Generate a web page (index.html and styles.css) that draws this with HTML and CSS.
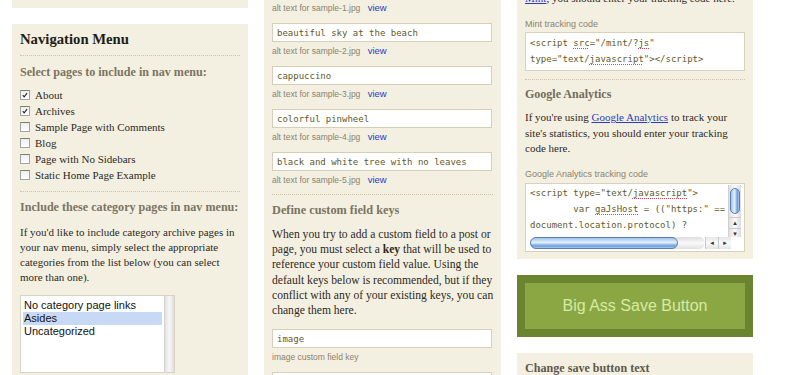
FILE: index.html
```html
<!DOCTYPE html>
<html lang="en">
<head>
    <meta charset="UTF-8">
    <meta name="viewport" content="width=device-width, initial-scale=1.0">
    <title>Theme Options</title>
    <link rel="stylesheet" href="styles.css">
</head>
<body>

<div class="page">

    <!-- Left column: navigation menu options -->
    <div class="column">
        <div class="panel panel-stub"></div>

        <div class="panel">
            <h2 class="panel-title">Navigation Menu</h2>

            <div class="section">
                <h3 class="subhead">Select pages to include in nav menu:</h3>
                <ul class="checklist">
                    <li><span class="checkbox checked"><svg viewBox="0 0 10 10"><path d="M2.2 5.2 L4 7.4 L7.6 2.6"/></svg></span>About</li>
                    <li><span class="checkbox checked"><svg viewBox="0 0 10 10"><path d="M2.2 5.2 L4 7.4 L7.6 2.6"/></svg></span>Archives</li>
                    <li><span class="checkbox"></span>Sample Page with Comments</li>
                    <li><span class="checkbox"></span>Blog</li>
                    <li><span class="checkbox"></span>Page with No Sidebars</li>
                    <li><span class="checkbox"></span>Static Home Page Example</li>
                </ul>
            </div>

            <div class="section">
                <h3 class="subhead">Include these category pages in nav menu:</h3>
                <p class="text">If you'd like to include category archive pages in<br>
                    your nav menu, simply select the appropriate<br>
                    categories from the list below (you can select<br>
                    more than one).</p>
                <div class="listbox">
                    <ul>
                        <li>No category page links</li>
                        <li class="selected">Asides</li>
                        <li>Uncategorized</li>
                    </ul>
                    <div class="listbox-track"></div>
                </div>
            </div>
        </div>
    </div>

    <!-- Middle column: image alt texts and custom field keys -->
    <div class="column">
        <div class="panel panel-mid">
            <div class="section">
                <div class="hint first">alt text for sample-1.jpg <a href="#">view</a></div>

                <div class="field">
                    <input type="text" value="beautiful sky at the beach">
                    <div class="hint">alt text for sample-2.jpg <a href="#">view</a></div>
                </div>
                <div class="field">
                    <input type="text" value="cappuccino">
                    <div class="hint">alt text for sample-3.jpg <a href="#">view</a></div>
                </div>
                <div class="field">
                    <input type="text" value="colorful pinwheel">
                    <div class="hint">alt text for sample-4.jpg <a href="#">view</a></div>
                </div>
                <div class="field">
                    <input type="text" value="black and white tree with no leaves">
                    <div class="hint">alt text for sample-5.jpg <a href="#">view</a></div>
                </div>
            </div>

            <div class="section">
                <h3 class="subhead">Define custom field keys</h3>
                <p class="text">When you try to add a custom field to a post or<br>
                    page, you must select a <b>key</b> that will be used to<br>
                    reference your custom field value. Using the<br>
                    default keys below is recommended, but if they<br>
                    conflict with any of your existing keys, you can<br>
                    change them here.</p>

                <div class="field">
                    <input type="text" value="image">
                    <div class="hint">image custom field key</div>
                </div>
                <div class="field">
                    <input type="text" value="">
                </div>
            </div>
        </div>
    </div>

    <!-- Right column: tracking codes and save button -->
    <div class="column">
        <div class="panel">
            <div class="section">
                <p class="text clipped"><a href="#">Mint</a>, you should enter your tracking code here.</p>
                <div class="label">Mint tracking code</div>
                <div class="codebox">
                    <div class="code-line">&lt;script <span class="typo">src</span>="/mint/?<span class="typo">js</span>"</div>
                    <div class="code-line">type="text/<span class="typo">javascript</span>"&gt;&lt;/script&gt;</div>
                </div>
            </div>

            <div class="section section-ga">
                <h3 class="subhead large">Google Analytics</h3>
                <p class="text">If you're using <a href="#">Google Analytics</a> to track your<br>
                    site's statistics, you should enter your tracking<br>
                    code here.</p>
                <div class="label">Google Analytics tracking code</div>
                <div class="codebox scrolling">
                    <div class="code-line">&lt;script type="text/<span class="typo">javascript</span>"&gt;</div>
                    <div class="code-line">        var <span class="typo">gaJsHost</span> = (("https:" ==</div>
                    <div class="code-line">document.location.protocol) ?</div>
                    <div class="code-line">"https://ssl." : "http://www.");</div>

                    <div class="vscroll">
                        <div class="vthumb"></div>
                        <div class="arrows-v"><span>&#9652;</span><span>&#9662;</span></div>
                    </div>
                    <div class="hscroll">
                        <div class="htrack"><div class="hthumb"></div></div>
                        <div class="arrows-h"><span>&#9666;</span><span>&#9656;</span></div>
                    </div>
                </div>
            </div>
        </div>

        <div class="save-box">
            <button class="save-button">Big Ass Save Button</button>
        </div>

        <div class="panel">
            <h3 class="subhead dark">Change save button text</h3>
        </div>
    </div>

</div>

</body>
</html>
```

FILE: styles.css
```css
html, body {
    height: 375px;
    overflow: hidden;
}

body {
    margin: 0;
    background: #fff;
    font-family: "Liberation Serif", "Times New Roman", serif;
    color: #2c2923;
}

a {
    color: #2b3bc4;
}

.page {
    display: grid;
    grid-template-columns: 236px 237px 236px;
    column-gap: 16px;
    padding-left: 12px;
    align-items: start;
}

.column {
    display: flex;
    flex-direction: column;
    gap: 16px;
}

.panel {
    background: #f4f0e1;
    padding: 0 8px;
}

.panel-stub {
    height: 8px;
}

.panel-title {
    margin: 0;
    padding: 7px 0 8px;
    font-size: 14.7px;
    line-height: 16px;
    color: #1f1d1a;
}

/* sections are split by a dotted rule */
.section {
    padding: 9px 0 8px;
    border-top: 1px dotted #cbc3a9;
}

.section + .section {
    padding-top: 8px;
}

.column .panel > .section:first-child {
    border-top: none;
    padding-top: 0;
}

.section.section-ga {
    padding-top: 6px;
    padding-bottom: 7px;
}

.subhead {
    margin: 0;
    font-size: 12.1px;
    line-height: 14px;
    color: #7b7461;
}

.subhead.large {
    font-size: 12px;
    line-height: 16px;
    color: #736c5a;
}

.subhead.dark {
    padding-top: 8px;
    color: #5e594b;
}

.text {
    margin: 11px 0 0;
    font-size: 11px;
    line-height: 15px;
}

.panel-mid .text {
    margin-top: 10px;
    font-size: 11.6px;
    line-height: 15.2px;
    white-space: nowrap;
}

.panel-mid .subhead {
    font-size: 12.3px;
}

/* checkboxes */
.checklist {
    list-style: none;
    margin: 8px 0 0;
    padding: 0;
}

.checklist li {
    display: flex;
    align-items: center;
    gap: 5px;
    height: 16px;
    font-size: 11px;
}

.checkbox {
    width: 10px;
    height: 10px;
    box-sizing: border-box;
    border: 1px solid #a3a3a3;
    border-top-color: #7c7c7c;
    background: linear-gradient(#eeeeee, #ffffff);
}

.checkbox svg {
    display: block;
    width: 8px;
    height: 8px;
}

.checkbox path {
    fill: none;
    stroke: #222;
    stroke-width: 1.3;
}

/* category list box */
.listbox {
    display: flex;
    width: 155px;
    height: 78px;
    margin-top: 10px;
    box-sizing: border-box;
    background: #fff;
    border: 1px solid #d8d3c2;
}

.listbox ul {
    flex: 1;
    list-style: none;
    margin: 0;
    padding: 3px 2px;
    font-family: "Liberation Sans", Arial, sans-serif;
    font-size: 11px;
    line-height: 13px;
    color: #111;
}

.listbox li {
    padding-left: 1px;
}

.listbox .selected {
    background: #c8d9f6;
}

.listbox-track {
    width: 9px;
    border-left: 1px solid #d4d4d4;
    background: linear-gradient(to right, #e2e2e2, #f7f7f7 50%, #dedede);
}

/* alt text fields */
.hint {
    margin-top: 3px;
    font-family: "Liberation Sans", Arial, sans-serif;
    font-size: 8.5px;
    line-height: 12px;
    color: #8a8370;
}

.hint.first {
    margin-top: 2px;
}

.hint a {
    margin-left: 5px;
    font-size: 9.5px;
    text-decoration: none;
}

.field {
    margin-top: 9px;
}

.section .text + .field {
    margin-top: 11px;
}

.field input {
    display: block;
    width: 220px;
    height: 19px;
    box-sizing: border-box;
    margin: 0;
    padding: 3px 4px;
    border: 1px solid #d6cfb6;
    background: #fff;
    font-family: "DejaVu Sans Mono", monospace;
    font-size: 9px;
    line-height: 11px;
    color: #5f5a2a;
    outline: none;
}

/* tracking codes */
.clipped {
    margin-top: -9px;
    line-height: 15.5px;
}

.label {
    margin-top: 9.5px;
    font-family: "Liberation Sans", Arial, sans-serif;
    font-size: 9px;
    line-height: 12px;
    color: #8a8370;
}

.codebox {
    margin-top: 2px;
    padding: 2px 4px 3px;
    background: #fff;
    border: 1px solid #d9d2bb;
    font-family: "DejaVu Sans Mono", monospace;
    font-size: 9px;
    line-height: 16px;
    color: #5f5a2a;
}

.code-line {
    white-space: pre;
}

.typo {
    text-decoration: underline dotted #e2405a;
    text-underline-offset: 2px;
}

.subhead.large + .text {
    margin-top: 8px;
    line-height: 15.5px;
}

.text + .label {
    margin-top: 11.5px;
}

.label + .codebox.scrolling {
    margin-top: 3px;
}

.codebox.scrolling {
    position: relative;
    height: 69px;
    box-sizing: border-box;
    padding-top: 1px;
    overflow: hidden;
}

/* aqua style scrollbars */
.vscroll {
    position: absolute;
    top: 1px;
    right: 3px;
    width: 12px;
    height: 52px;
    background: linear-gradient(to right, #e0e0e0, #fafafa 50%, #dcdcdc);
    border-left: 1px solid #cfcfcf;
}

.vthumb {
    margin: 3px 1px 0;
    height: 24px;
    border-radius: 6px;
    border: 1px solid #5a7fb5;
    background: linear-gradient(to right, #9ec3ec, #e4f0fc 45%, #6b9ddb 80%, #a9cbf0);
}

.arrows-v {
    display: flex;
    flex-direction: column;
    margin-top: 3px;
    font-family: "DejaVu Sans", sans-serif;
    font-size: 7px;
    line-height: 10px;
    text-align: center;
    color: #333;
}

.arrows-v span {
    border-top: 1px solid #c9c9c9;
}

.hscroll {
    position: absolute;
    left: 4px;
    bottom: 2px;
    width: 201px;
    height: 12px;
    display: flex;
    background: #fff;
}

.htrack {
    flex: 1;
    border-radius: 6px;
    background: linear-gradient(#dcdcdc, #fafafa 50%, #e0e0e0);
}

.hthumb {
    width: 146px;
    height: 10px;
    border-radius: 6px;
    border: 1px solid #5a7fb5;
    background: linear-gradient(#9ec3ec, #e4f0fc 45%, #6b9ddb 80%, #a9cbf0);
}

.arrows-h {
    display: flex;
    width: 26px;
    font-family: "DejaVu Sans", sans-serif;
    font-size: 7px;
    line-height: 12px;
    color: #333;
    background: linear-gradient(#e6e6e6, #fafafa 50%, #e2e2e2);
}

.arrows-h span {
    flex: 1;
    text-align: center;
    border-left: 1px solid #c9c9c9;
}

/* save button */
.save-box {
    padding: 8px;
    background: #6a8430;
}

.save-button {
    display: block;
    width: 100%;
    height: 46px;
    border: none;
    background: #8ba743;
    font-family: "Liberation Sans", Arial, sans-serif;
    font-size: 16px;
    color: #d6eba6;
    cursor: pointer;
}
```
